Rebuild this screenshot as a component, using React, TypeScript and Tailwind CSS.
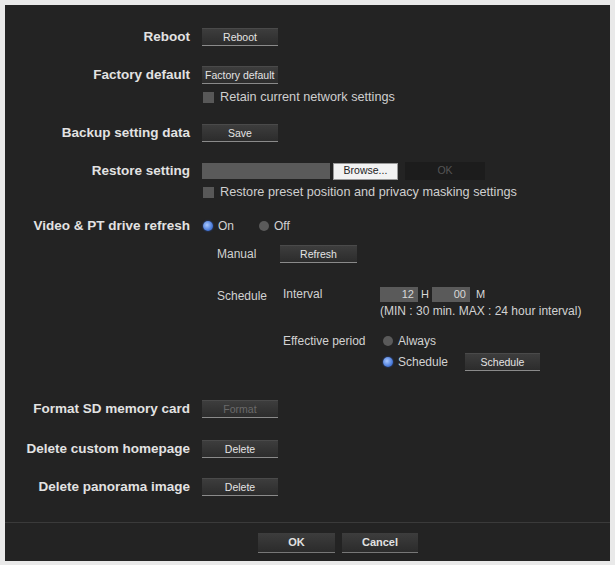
import type { ReactNode } from "react";

const font = { fontFamily: '"Liberation Sans", Arial, sans-serif' };

function Btn({ children, w = "w-[76px]", disabled = false, left = false }: { children: ReactNode; w?: string; disabled?: boolean; left?: boolean }) {
  return (
    <div
      className={`${w} h-[18px] flex items-center ${left ? "justify-start px-[3px]" : "justify-center"} bg-gradient-to-b from-[#3d3d3d] to-[#2c2c2c] border-t border-t-[#4a4a4a] border-b border-b-[#8a8a8a] text-[10.5px] leading-[14px] whitespace-nowrap ${disabled ? "text-[#6a6a6a]" : "text-[#e4e4e4]"}`}
    >
      {children}
    </div>
  );
}

function Label({ children }: { children: ReactNode }) {
  return (
    <div className="w-[197px] shrink-0 pr-[12px] text-right text-[13.5px] leading-[18px] font-bold text-[#e2e2e2] whitespace-nowrap">
      {children}
    </div>
  );
}

function Check({ text }: { text: string }) {
  return (
    <div className="flex items-center h-[14px] gap-[6px] pl-[1px]">
      <span className="w-[11px] h-[11px] bg-[#585858]" />
      <span className="text-[12.7px] leading-[14px] text-[#cfcfcf] whitespace-nowrap">{text}</span>
    </div>
  );
}

function Radio({ on, text }: { on: boolean; text: string }) {
  return (
    <div className="flex items-center gap-[5px] h-[14px]">
      <span
        className={`w-[10px] h-[10px] rounded-full ${on ? "bg-[radial-gradient(circle_at_40%_40%,#a9c8ff,#3f72d6_70%)] shadow-[0_0_2px_#2d55b0]" : "bg-[#5a5a5a]"}`}
      />
      <span className="text-[12px] leading-[14px] text-[#d2d2d2]">{text}</span>
    </div>
  );
}

const sub = "text-[12px] leading-[14px] text-[#d2d2d2] whitespace-nowrap";

export default function App() {
  return (
    <div className="w-[615px] h-[565px] bg-[#e9e9e9] p-[5px] pb-[4px]" style={font}>
      <div className="h-full bg-[#232323] flex flex-col">
        <div className="h-[517px] pt-[23px]">
          <div className="flex items-center">
            <Label>Reboot</Label>
            <Btn>Reboot</Btn>
          </div>

          <div className="flex mt-5">
            <Label>Factory default</Label>
            <div>
              <Btn left>Factory default</Btn>
              <div className="mt-[6px]">
                <Check text="Retain current network settings" />
              </div>
            </div>
          </div>

          <div className="flex items-center mt-5">
            <Label>Backup setting data</Label>
            <Btn>Save</Btn>
          </div>

          <div className="flex mt-5">
            <Label>Restore setting</Label>
            <div>
              <div className="flex items-center h-[18px]">
                <div className="w-[128px] h-[16px] bg-[#5a5a5a]" />
                <div className="ml-[3px] w-[65px] h-[17px] bg-[#f2f2f2] border border-[#9a9a9a] text-[10.5px] text-[#222] flex items-center justify-center">
                  Browse...
                </div>
                <div className="ml-[7px] w-[80px] h-[18px] bg-[#1c1c1c] text-[10.5px] text-[#555] flex items-center justify-center">OK</div>
              </div>
              <div className="mt-[5px]">
                <Check text="Restore preset position and privacy masking settings" />
              </div>
            </div>
          </div>

          <div className="flex mt-5">
            <Label>
              <div className="h-[14px] flex items-center justify-end">Video &amp; PT drive refresh</div>
            </Label>
            <div>
              <div className="flex items-center h-[14px] pl-[1px] gap-[25px]">
                <Radio on text="On" />
                <Radio on={false} text="Off" />
              </div>

              <div className="flex items-center mt-[12px] pl-[15px]">
                <div className={`w-[63px] ${sub}`}>Manual</div>
                <Btn w="w-[77px]">Refresh</Btn>
              </div>

              <div className="flex mt-[23px] pl-[15px]">
                <div className={`w-[66px] h-[16px] flex items-center pt-[4px] ${sub}`}>Schedule</div>
                <div>
                  <div className="flex">
                    <div className={`w-[97px] h-[16px] flex items-center ${sub}`}>Interval</div>
                    <div>
                      <div className="flex items-center h-[16px] text-[11px] text-[#d8d8d8]">
                        <div className="w-[38px] h-[15px] bg-[#5a5a5a] text-right pr-[4px] leading-[15px]">12</div>
                        <span className="w-[14px] text-center">H</span>
                        <div className="w-[38px] h-[15px] bg-[#5a5a5a] text-right pr-[4px] leading-[15px]">00</div>
                        <span className="ml-[6px]">M</span>
                      </div>
                      <div className={`mt-[2px] h-[14px] flex items-center ${sub}`}>(MIN : 30 min. MAX : 24 hour interval)</div>
                    </div>
                  </div>

                  <div className="flex mt-4">
                    <div className={`w-[100px] h-[14px] flex items-center ${sub}`}>Effective period</div>
                    <div>
                      <Radio on={false} text="Always" />
                      <div className="flex items-center mt-[5px] h-[18px]">
                        <div className="w-[82px]">
                          <Radio on text="Schedule" />
                        </div>
                        <Btn w="w-[75px]">Schedule</Btn>
                      </div>
                    </div>
                  </div>
                </div>
              </div>
            </div>
          </div>

          <div className="flex items-center mt-[29px]">
            <Label>Format SD memory card</Label>
            <Btn disabled>Format</Btn>
          </div>

          <div className="flex items-center mt-[22px]">
            <Label>Delete custom homepage</Label>
            <Btn>Delete</Btn>
          </div>

          <div className="flex items-center mt-5">
            <Label>Delete panorama image</Label>
            <Btn>Delete</Btn>
          </div>
        </div>

        <div className="flex-1 border-t border-t-[#3a3a3a] pt-[10px] pl-[253px] flex gap-[7px]">
          <div className="w-[77px] h-[20px] bg-gradient-to-b from-[#3d3d3d] to-[#2b2b2b] border-b border-b-[#777] flex items-center justify-center text-[11px] font-bold text-[#e2e2e2]">
            OK
          </div>
          <div className="w-[76px] h-[20px] bg-gradient-to-b from-[#3d3d3d] to-[#2b2b2b] border-b border-b-[#777] flex items-center justify-center text-[11px] font-bold text-[#e2e2e2]">
            Cancel
          </div>
        </div>
      </div>
    </div>
  );
}
